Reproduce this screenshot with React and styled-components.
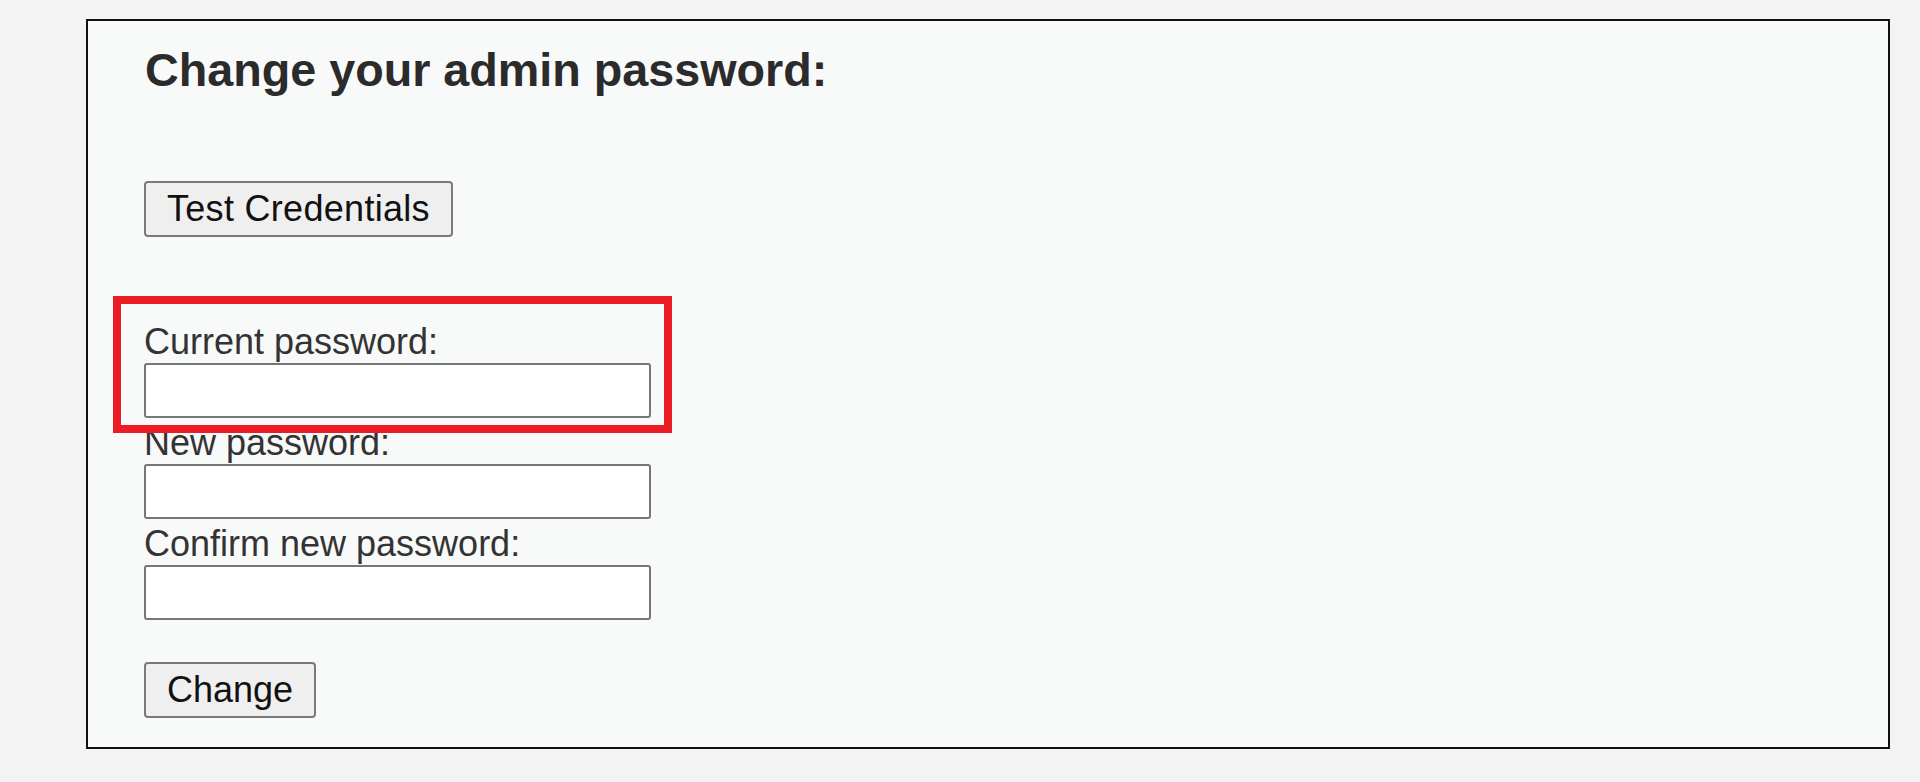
import React from 'react';
import styled, { createGlobalStyle } from 'styled-components';

const GlobalStyle = createGlobalStyle`
  html, body {
    margin: 0;
    padding: 0;
    background: #f3f3f3;
  }
  * {
    box-sizing: border-box;
  }
`;

const Page = styled.div`
  padding: 19px 30px 0 86px;
  font-family: "Liberation Sans", Arial, sans-serif;
  color: #333;
`;

const Panel = styled.form`
  display: flex;
  flex-direction: column;
  align-items: flex-start;
  padding: 23px 56px 29px;
  background: #f8f9f9;
  border: 2px solid #111;
`;

const Heading = styled.h2`
  margin: 0;
  font-size: 46.7px;
  line-height: 52px;
  font-weight: 700;
  color: #2b2b2b;
  padding-left: 1px;
`;

const Button = styled.button`
  margin-top: ${({ $gap }) => $gap}px;
  padding: 5px 21px;
  font-family: inherit;
  font-size: 36px;
  letter-spacing: ${({ $spacing }) => $spacing || 0}px;
  line-height: 42px;
  color: #111;
  background: #efefef;
  border: 2px solid #7a7a7a;
  border-radius: 4px;
  cursor: pointer;
`;

const Fields = styled.div`
  margin-top: 80px;
  display: flex;
  flex-direction: column;
`;

const Field = styled.div`
  position: relative;
  display: flex;
  flex-direction: column;
  align-items: flex-start;
`;

const Label = styled.label`
  display: block;
  font-size: 36px;
  line-height: 45px;
  padding-top: 2px;
  margin-bottom: -2px;
  color: #333;
`;

const Input = styled.input`
  margin-top: 1px;
  width: 507px;
  height: 55px;
  padding: 0 8px;
  font-family: inherit;
  font-size: 30px;
  background: #fff;
  border: 2px solid #777;
  border-radius: 3px;
`;

const Highlight = styled.div`
  position: absolute;
  left: -31px;
  top: -21px;
  width: 559px;
  height: 137px;
  border: 8px solid #ec1c24;
  pointer-events: none;
  z-index: 2;
`;

const fields = [
  { id: 'current', label: 'Current password:', highlighted: true },
  { id: 'new', label: 'New password:' },
  { id: 'confirm', label: 'Confirm new password:' },
];

export default function App() {
  return (
    <>
      <GlobalStyle />
      <Page>
        <Panel onSubmit={(e) => e.preventDefault()}>
          <Heading>Change your admin password:</Heading>
          <Button type="button" $gap={85} $spacing={0.3}>Test Credentials</Button>

          <Fields>
            {fields.map((f) => (
              <Field key={f.id}>
                {f.highlighted && <Highlight />}
                <Label htmlFor={f.id}>{f.label}</Label>
                <Input id={f.id} type="password" />
              </Field>
            ))}
          </Fields>

          <Button type="submit" $gap={42}>Change</Button>
        </Panel>
      </Page>
    </>
  );
}
